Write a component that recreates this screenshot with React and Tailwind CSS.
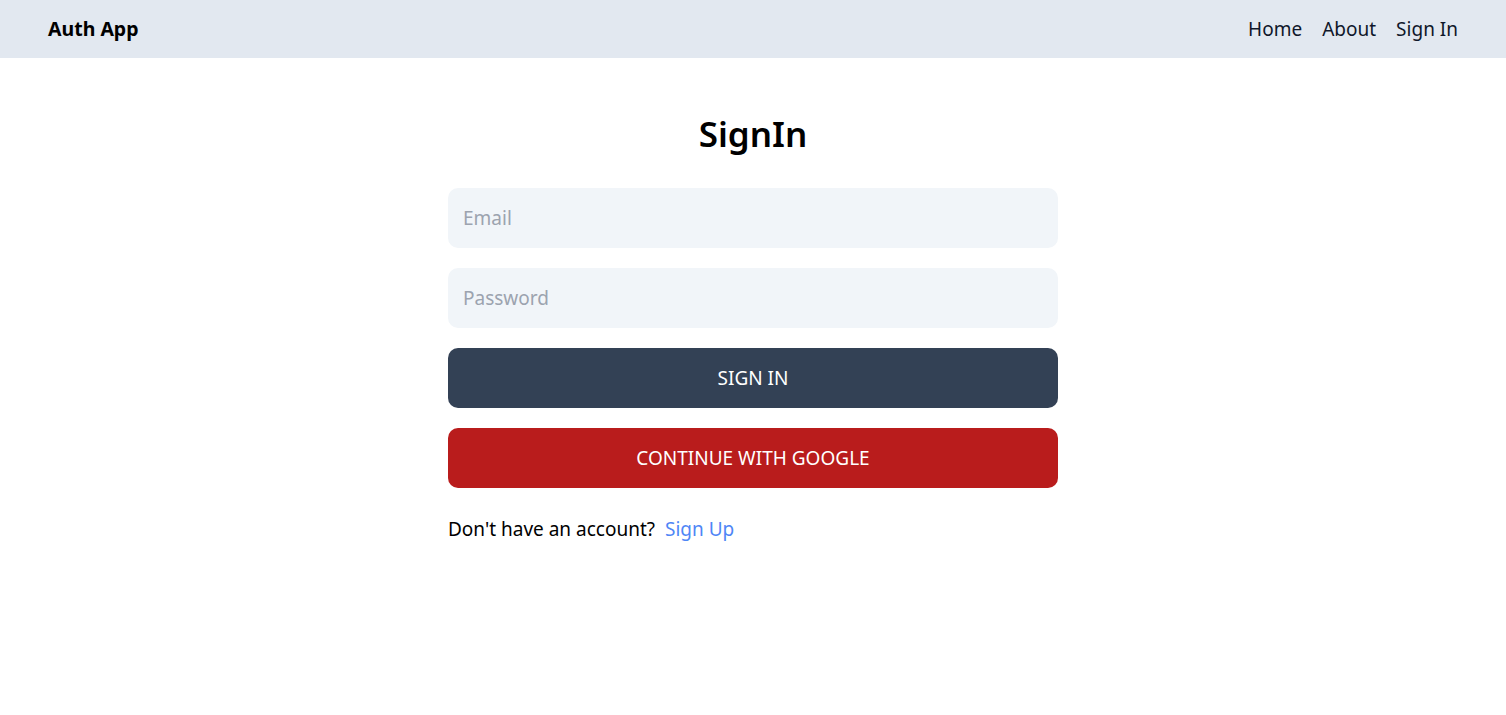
import React, { useState } from 'react';

const App = () => {
  const [form, setForm] = useState({ email: '', password: '' });

  const handleChange = (e) => {
    setForm({ ...form, [e.target.id]: e.target.value });
  };

  return (
    <div className="min-h-screen bg-white text-black font-['Noto_Sans',sans-serif]">
      <header className="bg-[#e2e8f0]">
        <div className="flex items-center justify-between h-[58px] px-12">
          <h1 className="font-bold text-[19.5px]">Auth App</h1>
          <ul className="flex gap-5 text-[19px] text-[#0f172a]">
            <li>Home</li>
            <li>About</li>
            <li>Sign In</li>
          </ul>
        </div>
      </header>

      <div className="w-[610px] mx-auto">
        <h1 className="text-[35px] leading-[45px] text-center font-semibold mt-[53px] mb-[32px]">SignIn</h1>
        <form className="flex flex-col gap-5">
          <input
            type="email"
            placeholder="Email"
            id="email"
            value={form.email}
            onChange={handleChange}
            className="bg-[#f1f5f9] h-[60px] px-[15px] rounded-[10px] text-[19px] outline-none placeholder:text-[#9ca3af]"
          />
          <input
            type="password"
            placeholder="Password"
            id="password"
            value={form.password}
            onChange={handleChange}
            className="bg-[#f1f5f9] h-[60px] px-[15px] rounded-[10px] text-[19px] outline-none placeholder:text-[#9ca3af]"
          />
          <button type="button" className="bg-[#334155] text-white h-[60px] rounded-[10px] uppercase text-[19px]">
            Sign In
          </button>
          <button type="button" className="bg-[#b91c1c] text-white h-[60px] rounded-[10px] uppercase text-[19px]">
            Continue with Google
          </button>
        </form>
        <div className="flex gap-[10px] mt-[26px] text-[19px] leading-[30px]">
          <p>Don't have an account?</p>
          <span className="text-[#4f86f6]">Sign Up</span>
        </div>
      </div>
    </div>
  );
};

export default App;
